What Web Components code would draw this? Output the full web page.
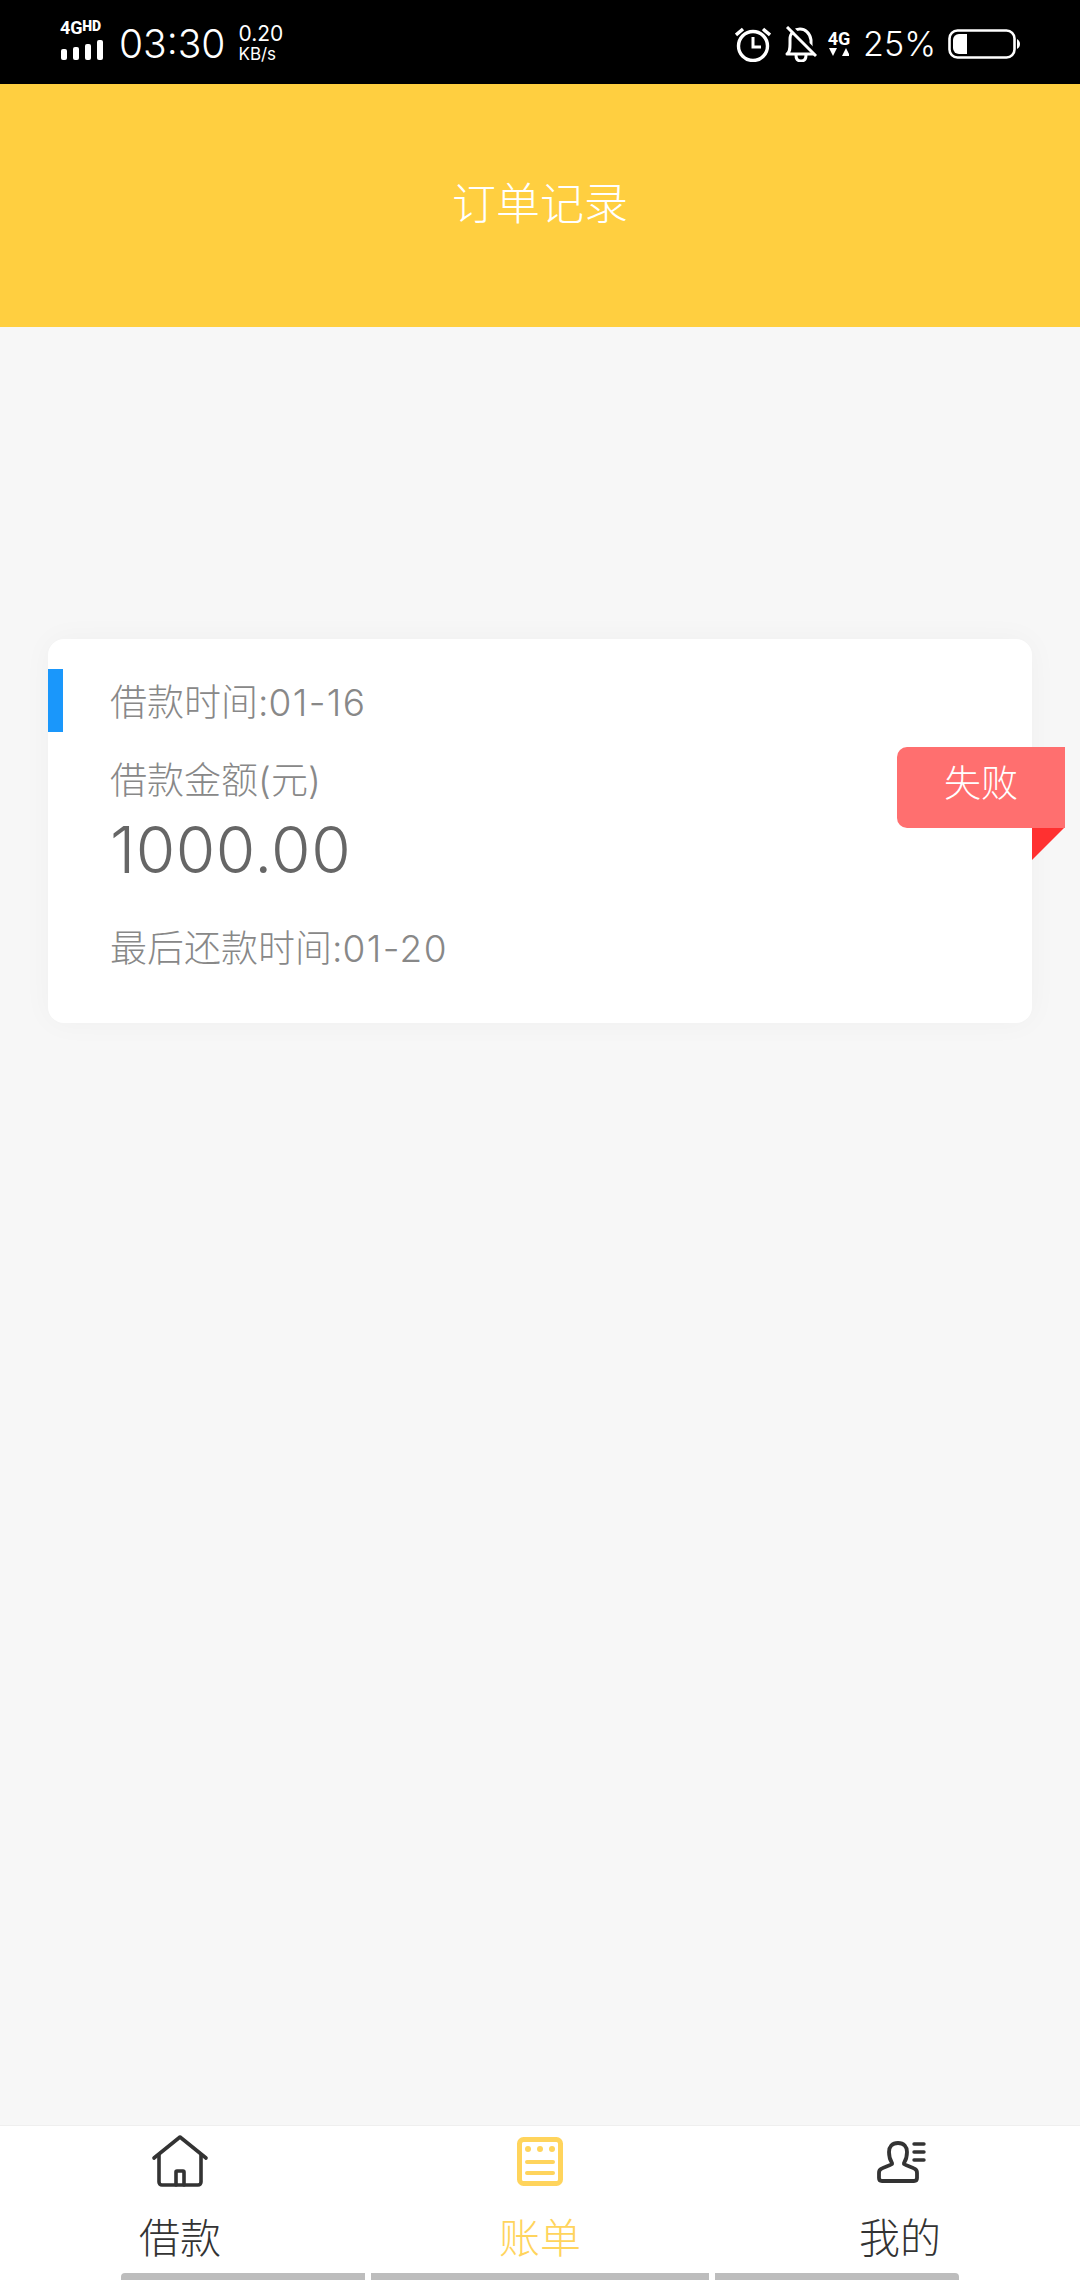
<!DOCTYPE html>
<html lang="zh">
<head>
<meta charset="utf-8">
<title>订单记录</title>
<style>
   html, body { margin: 0; padding: 0; }
   body { font-family: Inter, "Noto Sans CJK SC", sans-serif; background: #f7f7f7; }
</style>
</head>
<body>
<order-page>
   <status-bar slot="status"></status-bar>
   <page-header slot="header">订单记录</page-header>
   <order-card slot="content" status="失败" lent="借款时间:01-16" label="借款金额(元)" amount="1000.00" due="最后还款时间:01-20"></order-card>
   <tab-bar slot="tabs"></tab-bar>
</order-page>

<script>
class OrderPage extends HTMLElement {
   constructor() {
      super();
      this.attachShadow({ mode: "open" }).innerHTML = `<style>
         :host { display: flex; flex-direction: column; width: 1080px; height: 2280px; overflow: hidden; }
         main { flex: 1; padding: 312px 48px 0; background: #f7f7f7; }
      </style>
      <slot name="status"></slot>
      <slot name="header"></slot>
      <main><slot name="content"></slot></main>
      <slot name="tabs"></slot>`;
   }
}

class StatusBar extends HTMLElement {
   constructor() {
      super();
      this.attachShadow({ mode: "open" }).innerHTML = `<style>
         :host { display: flex; justify-content: space-between; align-items: center; height: 84px; padding: 4px 60px 0 60px; box-sizing: border-box; background: #000; color: #fff; font-family: Inter, sans-serif; }
         .side { display: flex; align-items: center; }
         .net { display: flex; flex-direction: column; width: 46px; margin-right: 13px; margin-top: -9px; }
         .net b { display: block; font: 700 18px/15px Roboto, sans-serif; height: 15px; white-space: nowrap; letter-spacing: -0.2px; }
         .net b i { font-style: normal; font-size: 14px; font-weight: 900; vertical-align: 3px; letter-spacing: 0; }
         .net svg { display: block; margin-top: 6px; }
         .time { font-size: 39px; font-weight: 300; line-height: 44px; margin-right: 13px; }
         .speed { font-size: 21px; line-height: 20px; }
         .speed div + div { font-size: 17px; }
         .alarm { margin-right: 14px; display: block; }
         .bell { margin-right: 9px; display: block; }
         .lte { display: flex; flex-direction: column; align-items: center; width: 26px; margin-right: 11px; }
         .lte b { font: 700 18px/15px Roboto, sans-serif; }
         .lte svg { display: block; margin-top: 2px; }
         .pct { font-size: 34px; font-weight: 300; line-height: 40px; margin-right: 12px; }
         .bat { display: block; }
      </style>
      <div class="side">
         <div class="net">
            <b>4G<i>HD</i></b>
            <svg width="44" height="20" viewBox="0 0 44 20" fill="#fff">
               <rect x="1" y="9" width="6" height="11" rx="2"/>
               <rect x="13" y="7" width="6" height="13" rx="2"/>
               <rect x="25" y="4" width="6" height="16" rx="2"/>
               <rect x="37" y="0" width="6" height="20" rx="2"/>
            </svg>
         </div>
         <div class="time">03:30</div>
         <div class="speed"><div>0.20</div><div>KB/s</div></div>
      </div>
      <div class="side">
         <svg class="alarm" width="36" height="36" viewBox="0 0 36 36" fill="none" stroke="#fff">
            <circle cx="18" cy="20" r="14.5" stroke-width="3.4"/>
            <path d="M18 11v10h8" stroke-width="3"/>
            <path d="M1 9l7-6M35 9l-7-6" stroke-width="3.4"/>
         </svg>
         <svg class="bell" width="32" height="36" viewBox="0 0 32 36" fill="none" stroke="#fff" stroke-width="3">
            <path d="M2 28c3-2 3-5 3-10V13C5 7 10 3 15 3s10 4 11 11v4c0 5 1 8 4 10z" stroke-linejoin="round"/>
            <path d="M11 29c0 4 2 6 5 6s5-2 5-6" />
            <path d="M2 1l29 29" stroke-width="3.4" stroke="#000" transform="translate(2 -2)"/>
            <path d="M2 1l29 29" stroke-width="3"/>
         </svg>
         <div class="lte">
            <b>4G</b>
            <svg width="20" height="9" viewBox="0 0 20 9" fill="#fff"><path d="M0 0h8L4 8zM13 8h8L17 0z"/></svg>
         </div>
         <div class="pct">25%</div>
         <svg class="bat" width="72" height="30" viewBox="0 0 72 30">
            <rect x="1.5" y="1.5" width="65" height="27" rx="8" fill="none" stroke="#fff" stroke-width="2.6"/>
            <path d="M5 11a6 6 0 0 1 6-6h8v20h-8a6 6 0 0 1-6-6z" fill="#fff"/>
            <path d="M69 10c2 1 3 3 3 5s-1 4-3 5z" fill="#fff"/>
         </svg>
      </div>`;
   }
}

class PageHeader extends HTMLElement {
   constructor() {
      super();
      this.attachShadow({ mode: "open" }).innerHTML = `<style>
         :host { display: flex; justify-content: center; align-items: center; height: 243px; padding-bottom: 10px; box-sizing: border-box; background: #ffcf40; color: #fff; font-size: 44px; font-family: "Noto Sans CJK SC", sans-serif; font-weight: 300; }
      </style><slot></slot>`;
   }
}

class OrderCard extends HTMLElement {
   constructor() {
      super();
      const attr = (n) => this.getAttribute(n) || "";
      // the date part runs a little wider than the label part
      const dated = (s) => {
         const [name, date] = s.split(":");
         return `${name}:<span class="date">${date}</span>`;
      };
      this.attachShadow({ mode: "open" }).innerHTML = `<style>
         :host { display: block; position: relative; box-sizing: border-box; height: 384px; padding: 42px 62px 0; background: #fff; border-radius: 16px; box-shadow: 0 0 30px rgba(0, 0, 0, 0.035); color: #888; font-family: Inter, "Noto Sans CJK SC", sans-serif; font-weight: 300; }
         .mark { position: absolute; left: 0; top: 30px; width: 15px; height: 63px; background: #1a97fb; }
         .line { font-size: 37px; line-height: 44px; height: 44px; }
         .date { letter-spacing: 1.4px; }
         .label { margin-top: 34px; }
         .amount { color: #666; font-size: 64px; line-height: 76px; height: 76px; margin-top: 9px; letter-spacing: 0.5px; }
         .due { margin-top: 39px; }
         .badge { position: absolute; right: -33px; top: 108px; width: 168px; height: 81px; padding-bottom: 13px; box-sizing: border-box; display: flex; align-items: center; justify-content: center; background: #ff6f6f; color: #fff; font-size: 37px; border-radius: 10px 0 0 10px; }
         .fold { position: absolute; right: -32px; top: 189px; width: 0; height: 0; border-style: solid; border-width: 32px 32px 0 0; border-color: #ff3030 transparent transparent transparent; }
      </style>
      <div class="mark"></div>
      <div class="line">${dated(attr("lent"))}</div>
      <div class="line label">${attr("label")}</div>
      <div class="amount">${attr("amount")}</div>
      <div class="line due">${dated(attr("due"))}</div>
      <div class="badge">${attr("status")}</div>
      <div class="fold"></div>`;
   }
}

class TabBar extends HTMLElement {
   constructor() {
      super();
      this.attachShadow({ mode: "open" }).innerHTML = `<style>
         :host { display: block; height: 155px; box-sizing: border-box; background: #fff; border-top: 1px solid #efefef; font-family: "Noto Sans CJK SC", sans-serif; font-weight: 300; }
         .tabs { display: grid; grid-template-columns: repeat(3, 1fr); height: 147px; }
         .tab { display: flex; flex-direction: column; align-items: center; color: #333; font-size: 41px; line-height: 48px; }
         .tab.on { color: #ffd45c; }
         .icon { display: block; height: 60px; margin-top: 4px; margin-bottom: 21px; }
         .nav { display: flex; gap: 6px; padding-left: 121px; height: 7px; }
         .nav div { height: 7px; background: #bdbdbd; }
         .nav div:first-child { width: 244px; border-radius: 4px 0 0 0; }
         .nav div:nth-child(2) { width: 338px; }
         .nav div:last-child { width: 244px; border-radius: 0 4px 0 0; }
      </style>
      <div class="tabs">
         <div class="tab">
            <svg class="icon" width="60" height="60" viewBox="0 0 60 60" fill="none" stroke="#333" stroke-width="3.6" stroke-linejoin="round" stroke-linecap="round">
               <path d="M4 28L30 7l26 21"/>
               <path d="M9 25v27a3 3 0 0 0 3 3h36a3 3 0 0 0 3-3V25"/>
               <path d="M26 55V42a1 1 0 0 1 1-1h6a1 1 0 0 1 1 1v13"/>
            </svg>
            <span>借款</span>
         </div>
         <div class="tab on">
            <svg class="icon" width="60" height="60" viewBox="0 0 60 60" fill="none" stroke="#ffd45c" stroke-width="4" stroke-linecap="round">
               <rect x="9.5" y="9.5" width="41" height="44" rx="4" stroke-width="5"/>
               <path d="M17 32h26M17 43h26"/>
               <circle cx="18" cy="19" r="3" fill="#ffd45c" stroke="none"/>
               <circle cx="30" cy="19" r="3" fill="#ffd45c" stroke="none"/>
               <circle cx="42" cy="19" r="3" fill="#ffd45c" stroke="none"/>
            </svg>
            <span>账单</span>
         </div>
         <div class="tab">
            <svg class="icon" width="60" height="60" viewBox="0 0 60 60" fill="none" stroke="#333" stroke-width="3.8" stroke-linecap="round" stroke-linejoin="round">
               <path d="M28 13c-6 0-9 4-9 9 0 5 1 8 3 11v1c-3 2-8 3-11 5-2 1-2 3-2 4v5c0 2 1 3 3 3h32c2 0 3-1 3-3v-5c0-1 0-3-2-4-3-2-8-3-11-5v-1c2-3 3-6 3-11 0-5-3-9-9-9z"/>
               <path d="M44 14h10M44 22h10M44 30h10" stroke-width="3.4"/>
            </svg>
            <span>我的</span>
         </div>
      </div>
      <div class="nav"><div></div><div></div><div></div></div>`;
   }
}

customElements.define("order-page", OrderPage);
customElements.define("status-bar", StatusBar);
customElements.define("page-header", PageHeader);
customElements.define("order-card", OrderCard);
customElements.define("tab-bar", TabBar);
</script>
</body>
</html>
